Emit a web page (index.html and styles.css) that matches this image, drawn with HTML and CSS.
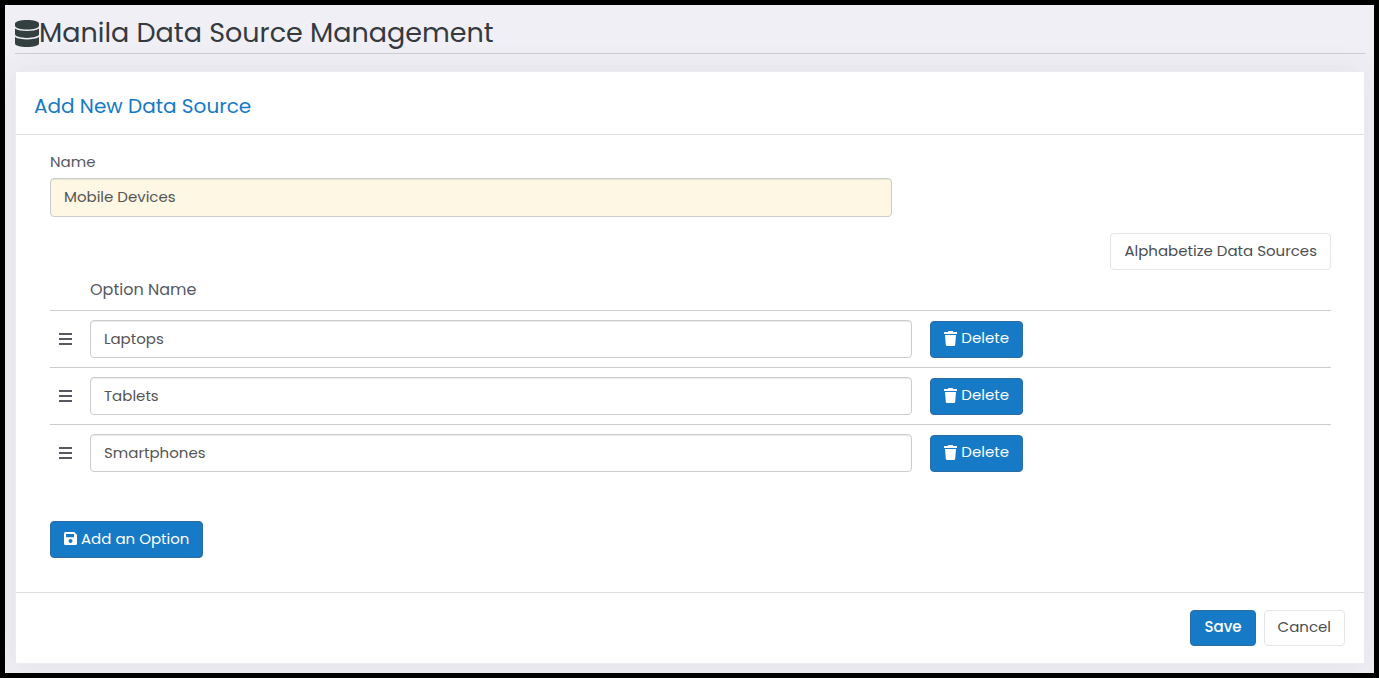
FILE: index.html
```html
<!DOCTYPE html>
<html lang="en">
<head>
	<meta charset="UTF-8">
	<meta name="viewport" content="width=device-width, initial-scale=1">
	<title>Manila Data Source Management</title>
	<link rel="stylesheet" href="styles.css">
</head>
<body>
	<!-- shared icons -->
	<svg class="sprite" aria-hidden="true">
		<symbol id="icon-bars" viewBox="0 0 13 12">
			<path d="M0 0h13v2H0zM0 5h13v2H0zM0 10h13v2H0z"/>
		</symbol>
		<symbol id="icon-trash" viewBox="0 0 13 15">
			<path d="M4.400 0h4.200l.7 1H13v2H0V1h3.700zM1 4h11l-.8 9.700a1.400 1.400 0 0 1-1.400 1.300H3.200a1.400 1.400 0 0 1-1.400-1.300z"/>
		</symbol>
	</svg>
	<div class="page">
		<h1 class="page-title">
			<svg class="icon-database" viewBox="0 0 24 27" aria-hidden="true">
				<path d="M24 3.600v2.200C24 8 18.600 9.600 12 9.600S0 8 0 5.800V3.600C0 1.600 5.400 0 12 0s12 1.600 12 3.600z"/>
				<path d="M0 8.600c2.600 1.800 7.300 2.400 12 2.400s9.400-.6 12-2.400v5.700c0 2-5.400 3.600-12 3.600S0 16.300 0 14.300z"/>
				<path d="M0 17c2.600 1.800 7.300 2.400 12 2.400s9.400-.6 12-2.400v6.400c0 2-5.400 3.600-12 3.600S0 25.400 0 23.400z"/>
			</svg>Manila Data Source Management
		</h1>
		<form class="card">
			<div class="card-head">
				<h2 class="card-title">Add New Data Source</h2>
			</div>
			<div class="card-body">
				<label class="label" for="source-name">Name</label>
				<input class="input input-name" id="source-name" type="text" value="Mobile Devices">
				<div class="toolbar">
					<button class="btn" type="button">Alphabetize Data Sources</button>
				</div>
				<table class="options">
					<thead>
						<tr>
							<th class="col-drag"></th>
							<th class="col-name" id="option-name">Option Name</th>
							<th></th>
						</tr>
					</thead>
					<tbody>
						<tr>
							<td class="col-drag"><svg class="icon-bars"><use href="#icon-bars"/></svg></td>
							<td><input class="input" type="text" value="Laptops" aria-labelledby="option-name"></td>
							<td><button class="btn btn-primary" type="button"><svg class="icon-trash"><use href="#icon-trash"/></svg>Delete</button></td>
						</tr>
						<tr>
							<td class="col-drag"><svg class="icon-bars"><use href="#icon-bars"/></svg></td>
							<td><input class="input" type="text" value="Tablets" aria-labelledby="option-name"></td>
							<td><button class="btn btn-primary" type="button"><svg class="icon-trash"><use href="#icon-trash"/></svg>Delete</button></td>
						</tr>
						<tr>
							<td class="col-drag"><svg class="icon-bars"><use href="#icon-bars"/></svg></td>
							<td><input class="input" type="text" value="Smartphones" aria-labelledby="option-name"></td>
							<td><button class="btn btn-primary" type="button"><svg class="icon-trash"><use href="#icon-trash"/></svg>Delete</button></td>
						</tr>
					</tbody>
				</table>
				<button class="btn btn-primary" type="button">
					<svg class="icon-save" viewBox="0 0 13 13" aria-hidden="true">
						<path fill-rule="evenodd" d="M1.500 0h8.700L13 2.800v8.700a1.500 1.500 0 0 1-1.500 1.500h-10A1.500 1.500 0 0 1 0 11.500v-10A1.500 1.500 0 0 1 1.500 0zM2 2v3.200h8V2zM6.500 7a2 2 0 1 0 0 4 2 2 0 0 0 0-4z"/>
					</svg>Add an Option
				</button>
			</div>
			<div class="card-foot">
				<button class="btn btn-primary btn-save" type="submit">Save</button>
				<button class="btn" type="button">Cancel</button>
			</div>
		</form>
	</div>
</body>
</html>
```
FILE: styles.css
```css
* {
	box-sizing: border-box;
}
body {
	margin: 0;
	min-height: 100vh;
	border: 5px solid #000;
	background: #f0eff5;
	color: #575962;
	font: 15px/22px Poppins, Inter, "Open Sans", sans-serif;
}
.sprite {
	display: none;
}
svg {
	fill: currentColor;
	flex: none;
}
.page {
	padding: 9px 9px 9px 10px;
	overflow: hidden;
}

/* title */
.page-title {
	display: flex;
	align-items: center;
	margin: 0 0 17px;
	padding-bottom: 1px;
	border-bottom: 1px solid #cfced5;
	color: #343a40;
	font-size: 27px;
	font-weight: 400;
	line-height: 38px;
}
.icon-database {
	width: 24px;
	height: 27px;
	fill: #343f40;
}

/* card */
.card {
	border: 1px solid #ebebf2;
	background: #fff;
	box-shadow: 0 1px 30px 1px rgba(69, 65, 78, .08);
}
.card-head {
	padding: 23px 18px 17px;
	border-bottom: 1px solid #dedede;
}
.card-title {
	margin: 0;
	color: #167ac6;
	font-size: 20px;
	font-weight: 400;
	line-height: 22px;
}
.card-body {
	padding: 16px 33px 34px 34px;
}
.card-foot {
	display: flex;
	justify-content: flex-end;
	gap: 8px;
	padding: 17px 19px;
	border-top: 1px solid #dedede;
}

/* form */
.label {
	display: block;
	margin-bottom: 5px;
}
.input {
	display: block;
	width: 100%;
	height: 38px;
	padding: 0 13px 2px;
	border: 1px solid #ccc;
	border-radius: 4px;
	background: #fff;
	box-shadow: inset 0 1px 1px rgba(0, 0, 0, .08);
	color: #555;
	font: inherit;
}
.input-name {
	width: 65.7%;
	height: 39px;
	background: #fdf7e3;
}
.btn {
	display: inline-flex;
	align-items: center;
	justify-content: center;
	gap: 4px;
	height: 37px;
	padding: 0 13px 2px;
	border: 1px solid #e4e4ec;
	border-radius: 4px;
	background: #fff;
	color: #4a4e52;
	font: inherit;
	white-space: nowrap;
	cursor: pointer;
}
.btn-primary {
	border-color: #2e6da4;
	background: #167ac6;
	color: #fff;
}
.btn-save {
	font-weight: 500;
}
.card-foot .btn {
	height: 36px;
}
.toolbar {
	display: flex;
	justify-content: flex-end;
	margin-top: 16px;
}

/* options */
.options {
	width: 100%;
	margin-bottom: 40px;
	border-collapse: collapse;
}
.options th {
	padding: 8px 9px 9px;
	font-size: 16px;
	font-weight: 400;
	line-height: 23px;
	text-align: left;
}
.options td {
	padding: 9px;
	border-top: 1px solid #ccc;
}
.options .col-drag {
	width: 31px;
	padding-right: 0;
}
.options .col-name {
	width: 65.6%;
}
.options .btn {
	display: flex;
}
.icon-bars {
	display: block;
	width: 13px;
	height: 12px;
}
.icon-trash {
	width: 13px;
	height: 15px;
}
.icon-save {
	width: 13px;
	height: 13px;
}
```
